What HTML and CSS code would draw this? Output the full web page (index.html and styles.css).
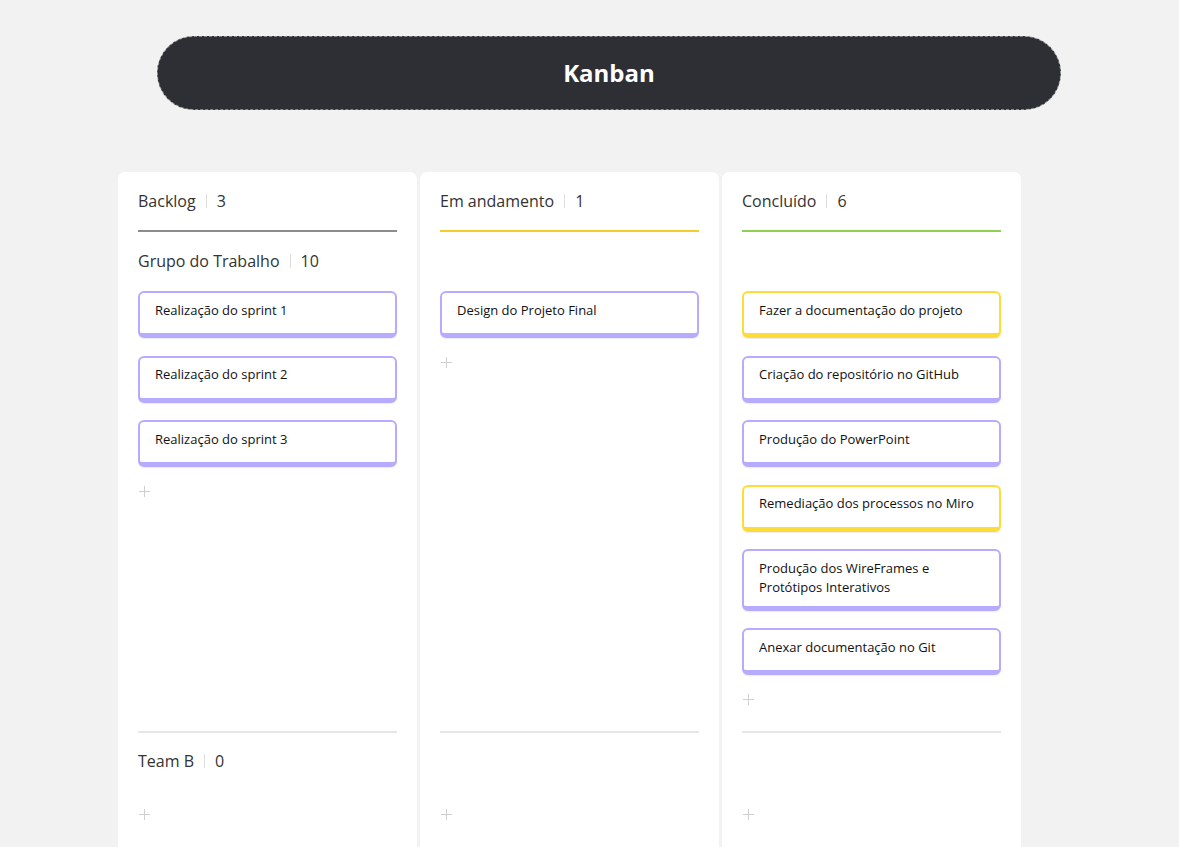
FILE: index.html
```html
<!DOCTYPE html>
<html lang="pt">
<head>
<meta charset="utf-8">
<title>Kanban</title>
<link rel="stylesheet" href="styles.css">
</head>
<body>
<header class="title-bar"><h1>Kanban</h1></header>
<main class="board">
  <section class="column">
    <div class="col-head"><span class="name">Backlog</span><span class="sep"></span><span class="count">3</span></div>
    <div class="col-line grey"></div>
    <div class="lane lane-main">
      <div class="lane-head"><span class="name">Grupo do Trabalho</span><span class="sep"></span><span class="count">10</span></div>
      <div class="card">Realização do sprint 1</div>
      <div class="card">Realização do sprint 2</div>
      <div class="card">Realização do sprint 3</div>
      <div class="add" aria-label="Adicionar"></div>
    </div>
    <div class="lane lane-second">
      <div class="lane-head"><span class="name">Team B</span><span class="sep"></span><span class="count">0</span></div>
      <div class="add" aria-label="Adicionar"></div>
    </div>
  </section>
  <section class="column">
    <div class="col-head"><span class="name">Em andamento</span><span class="sep"></span><span class="count">1</span></div>
    <div class="col-line yellow"></div>
    <div class="lane lane-main">
      <div class="lane-head"></div>
      <div class="card">Design do Projeto Final</div>
      <div class="add" aria-label="Adicionar"></div>
    </div>
    <div class="lane lane-second">
      <div class="lane-head"></div>
      <div class="add" aria-label="Adicionar"></div>
    </div>
  </section>
  <section class="column">
    <div class="col-head"><span class="name">Concluído</span><span class="sep"></span><span class="count">6</span></div>
    <div class="col-line green"></div>
    <div class="lane lane-main">
      <div class="lane-head"></div>
      <div class="card card-yellow">Fazer a documentação do projeto</div>
      <div class="card">Criação do repositório no GitHub</div>
      <div class="card">Produção do PowerPoint</div>
      <div class="card card-yellow">Remediação dos processos no Miro</div>
      <div class="card">Produção dos WireFrames e Protótipos Interativos</div>
      <div class="card">Anexar documentação no Git</div>
      <div class="add" aria-label="Adicionar"></div>
    </div>
    <div class="lane lane-second">
      <div class="lane-head"></div>
      <div class="add" aria-label="Adicionar"></div>
    </div>
  </section>
</main>
</body>
</html>
```

FILE: styles.css
```css
* { box-sizing: border-box; }
html, body { margin: 0; padding: 0; }
body {
  background: #f2f2f2;
  font-family: "Open Sans", "Noto Sans", sans-serif;
  color: #333;
  height: 847px;
  overflow: hidden;
}
.title-bar {
  width: 904px;
  height: 74px;
  margin: 36px 0 0 157px;
  background: #2e2f34;
  border: 1px dashed #8a8a8a;
  border-radius: 37px;
  display: flex;
  align-items: center;
  justify-content: center;
}
.title-bar h1 {
  margin: 0;
  color: #fff;
  font-size: 24px;
  font-weight: 700;
  line-height: 32px;
}
.board {
  display: flex;
  gap: 3px;
  margin: 62px 0 0 118px;
}
.column {
  width: 299px;
  height: 700px;
  background: #fff;
  border-radius: 7px;
  padding: 17px 20px 0 20px;
  display: flex;
  flex-direction: column;
}
.col-head, .lane-head {
  display: flex;
  align-items: center;
  font-size: 16px;
  line-height: 24px;
  height: 24px;
  color: #333;
}
.sep {
  width: 1px;
  height: 14px;
  background: #ddd;
  margin: 0 10px;
}
.col-line {
  height: 2px;
  margin-top: 17px;
}
.col-line.grey { background: #8c8c8c; }
.col-line.yellow { background: #f7cd2e; }
.col-line.green { background: #8fd14f; }
.lane {
  display: flex;
  flex-direction: column;
}
.lane-main {
  height: 501px;
  padding-top: 17px;
  border-bottom: 2px solid #e6e6e6;
}
.lane-main .lane-head { margin-bottom: 18px; }
.lane-second { padding-top: 16px; }
.lane-second .lane-head { margin-bottom: 36px; }
.card {
  min-height: 47px;
  border: 2px solid #b5acff;
  border-bottom-width: 5px;
  border-radius: 6px;
  padding: 7.5px 14px 9px 15px;
  font-size: 13px;
  line-height: 19px;
  color: #111;
  margin-bottom: 17.5px;
  box-shadow: 0 1px 1px rgba(0,0,0,0.08);
}
.card-yellow { border-color: #fddc3a; }
.add {
  position: relative;
  width: 11px;
  height: 11px;
  margin-top: 1.5px;
  margin-left: 1px;
}
.lane-second .add { margin-top: 0; }
.add::before, .add::after {
  content: "";
  position: absolute;
  background: #cfcfcf;
}
.add::before { left: 5px; top: 0; width: 1px; height: 11px; }
.add::after { top: 5px; left: 0; height: 1px; width: 11px; }
```
